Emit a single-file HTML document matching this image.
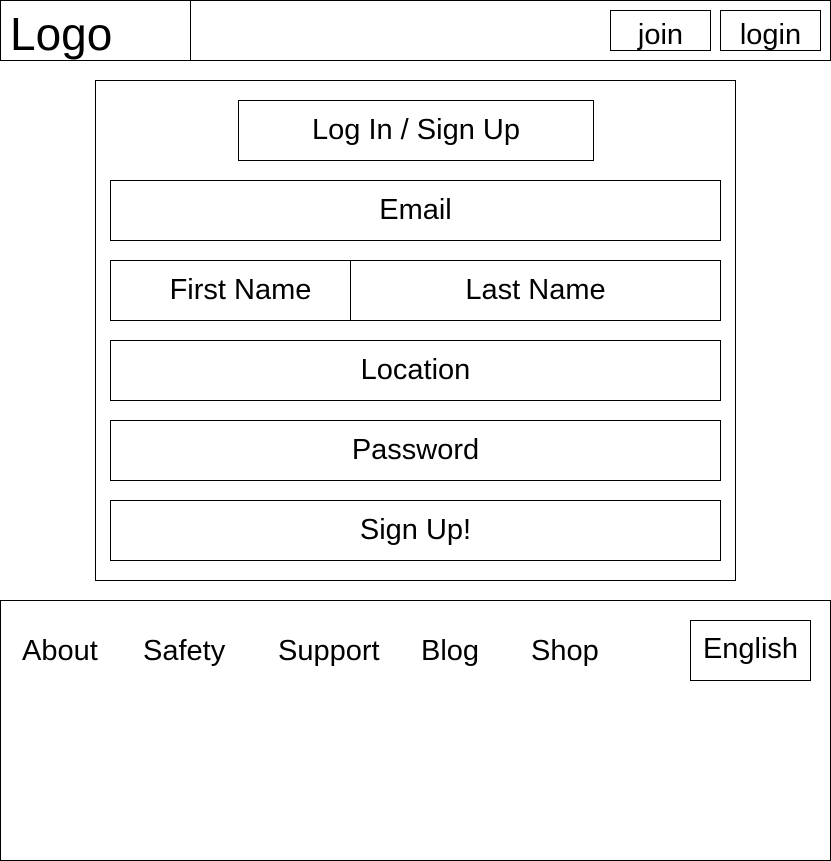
<!DOCTYPE html>
<html><head><style>
body{margin:0;width:831px;height:861px;background:#fff;font-family:"Liberation Sans",Arial,sans-serif;color:#000;position:relative;overflow:hidden}
.b{position:absolute;border:1px solid #000;box-sizing:border-box;display:flex;align-items:center;justify-content:center;font-size:29px}
.t{position:absolute;font-size:29px;line-height:1}
</style></head><body>
<div class="b" style="left:0;top:0;width:831px;height:61px"></div>
<div style="position:absolute;left:190px;top:0;width:1px;height:61px;background:#000"></div>
<div class="t" style="left:10px;top:11px;font-size:46px">Logo</div>
<div class="b" style="left:610px;top:10px;width:101px;height:41px;padding-top:10px">join</div>
<div class="b" style="left:720px;top:10px;width:101px;height:41px;padding-top:10px">login</div>

<div class="b" style="left:95px;top:80px;width:641px;height:501px"></div>
<div class="b" style="left:238px;top:100px;width:356px;height:61px">Log In / Sign Up</div>
<div class="b" style="left:110px;top:180px;width:611px;height:61px">Email</div>
<div class="b" style="left:110px;top:260px;width:241px;height:61px;padding-left:20px">First Name</div>
<div class="b" style="left:350px;top:260px;width:371px;height:61px">Last Name</div>
<div class="b" style="left:110px;top:340px;width:611px;height:61px">Location</div>
<div class="b" style="left:110px;top:420px;width:611px;height:61px">Password</div>
<div class="b" style="left:110px;top:500px;width:611px;height:61px">Sign Up!</div>

<div class="b" style="left:0;top:600px;width:831px;height:261px"></div>
<div class="t" style="left:22px;top:637px">About</div>
<div class="t" style="left:143px;top:637px">Safety</div>
<div class="t" style="left:278px;top:637px">Support</div>
<div class="t" style="left:421px;top:637px">Blog</div>
<div class="t" style="left:531px;top:637px">Shop</div>
<div class="b" style="left:690px;top:620px;width:121px;height:61px;padding-bottom:2px">English</div>
</body></html>
